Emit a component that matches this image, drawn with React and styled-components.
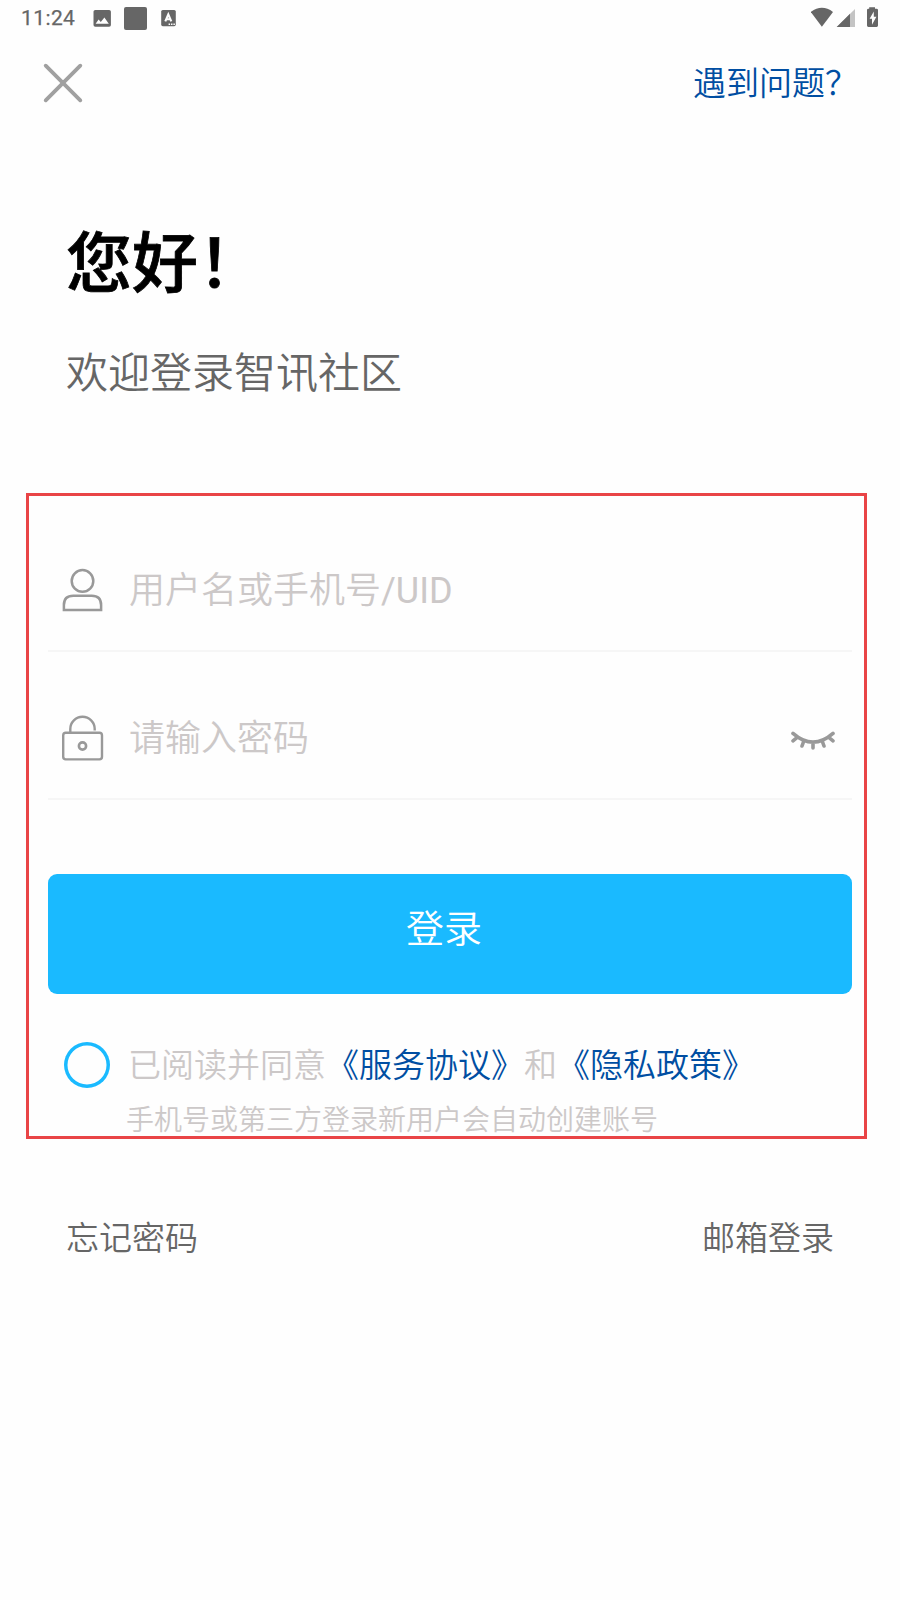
import React, { useState } from 'react';
import styled, { createGlobalStyle } from 'styled-components';

const GlobalStyle = createGlobalStyle`
  * {
    box-sizing: border-box;
  }
  body {
    margin: 0;
    background: #fefefe;
    font-family: Roboto, 'Noto Sans CJK SC', sans-serif;
  }
`;

function StatusBar() {
  return (
    <Status>
      <StatusGroup>
        <Clock>11:24</Clock>
        <svg width="18" height="18" viewBox="0 0 18 18">
          <rect x="0.5" y="0" width="17.4" height="16.8" rx="1.8" fill="#666" />
          <path d="M2.6 13.8 L5.6 9.4 L7.8 12 L11.4 7.4 L15.8 13.8 Z" fill="#fefefe" />
        </svg>
        <Square />
        <svg width="16" height="18" viewBox="0 0 16 18">
          <rect x="0.2" y="0" width="14.6" height="16.2" rx="1.6" fill="#666" />
          <path d="M4.3 11.4 L7.3 4.4 L10.3 11.4 M5.4 9.2 H9.2" fill="none" stroke="#fefefe" strokeWidth="2.1" />
          <path d="M7.6 14.2 h1.5 M10 14.2 h1.5 M12.4 14.2 h1.5" stroke="#fefefe" strokeWidth="1.4" />
        </svg>
      </StatusGroup>
      <svg width="68" height="22" viewBox="0 0 68 22">
        <path d="M-0.2 5 Q10.9 -3.4 22 5 L10.9 19.7 Z" fill="#666" />
        <path d="M25.7 20 L44 2 V20 Z" fill="#c4c4c4" />
        <path d="M25.7 20 L39 6.8 V20 Z" fill="#666" />
        <path d="M58.2 1.7 V0.2 H64 V1.7 H65.6 Q67 1.7 67 3.1 V18.6 Q67 20 65.6 20 H57.4 Q56 20 56 18.6 V3.1 Q56 1.7 57.4 1.7 Z" fill="#666" />
        <path d="M62.8 4.6 L58.6 11.8 H61 V17.8 L65.4 9.8 H62.8 Z" fill="#fefefe" />
      </svg>
    </Status>
  );
}

function Login() {
  const [agreed, setAgreed] = useState(false);
  return (
    <Page lang="zh-CN">
      <GlobalStyle />
      <StatusBar />
      <Header>
        <IconButton aria-label="close">
          <svg width="40" height="40" viewBox="0 0 40 40">
            <path d="M2.7 2.7 L37.3 37.3 M37.3 2.7 L2.7 37.3" stroke="#a0a0a0" strokeWidth="3.8" strokeLinecap="round" />
          </svg>
        </IconButton>
        <HelpLink>遇到问题？</HelpLink>
      </Header>
      <Title>您好！</Title>
      <Subtitle>欢迎登录智讯社区</Subtitle>
      <FormBox>
        <Field>
          <svg width="42" height="44" viewBox="0 0 42 44">
            <circle cx="20.5" cy="12.9" r="10.8" fill="none" stroke="#999" strokeWidth="2.5" />
            <path d="M1.9 41.9 V37 Q1.9 27.8 11.3 27.8 H29.7 Q39.1 27.8 39.1 37 V41.9 Z" fill="none" stroke="#999" strokeWidth="2.5" />
          </svg>
          <Input type="text" placeholder="用户名或手机号/UID" />
        </Field>
        <Field>
          <svg width="42" height="46" viewBox="0 0 42 46">
            <rect x="1.2" y="17.8" width="38.8" height="26.6" rx="2.6" fill="none" stroke="#999" strokeWidth="2.4" />
            <path d="M8.3 17 V14 A12.2 12.2 0 0 1 32.7 14 V15.5" fill="none" stroke="#999" strokeWidth="2.4" />
            <circle cx="20.5" cy="31" r="3.6" fill="none" stroke="#999" strokeWidth="2.6" />
          </svg>
          <Input type="password" placeholder="请输入密码" />
          <EyeButton aria-label="show password">
            <svg width="44" height="20" viewBox="0 0 44 20">
              <path d="M2 2.4 Q22 20 42 2.4 M6.5 6.2 L2 9.8 M13 9.5 L11 15 M22 11.2 V17 M31 9.5 L33 15 M37.5 6.2 L42 9.8" fill="none" stroke="#999" strokeWidth="3.6" strokeLinecap="round" />
            </svg>
          </EyeButton>
        </Field>
        <SubmitButton>登录</SubmitButton>
        <Agreement>
          <Radio $checked={agreed} onClick={() => setAgreed(!agreed)} aria-label="agree" />
          <p>
            已阅读并同意<a>《服务协议》</a>和<a>《隐私政策》</a>
          </p>
        </Agreement>
        <Hint>手机号或第三方登录新用户会自动创建账号</Hint>
      </FormBox>
      <Footer>
        <span>忘记密码</span>
        <span>邮箱登录</span>
      </Footer>
    </Page>
  );
}

const Page = styled.div`
  width: 900px;
  height: 1600px;
  display: flex;
  flex-direction: column;
  overflow: hidden;
  font-weight: 350;
`;

const Status = styled.div`
  height: 36px;
  display: flex;
  justify-content: space-between;
  align-items: flex-start;
  padding: 7px 21px 0 21px;
`;

const StatusGroup = styled.div`
  display: flex;
  align-items: center;
  height: 23px;

  svg:last-child {
    margin-left: 14px;
  }
`;

const Clock = styled.span`
  width: 72px;
  color: #666;
  font-size: 21px;
  font-weight: 400;
  line-height: 23px;
  letter-spacing: 0.4px;
  -webkit-text-stroke: 0.25px #666;
`;

const Square = styled.div`
  width: 23px;
  height: 23px;
  margin-left: 13px;
  border-radius: 2px;
  background: #666;
`;

const Header = styled.div`
  height: 96px;
  display: flex;
  justify-content: space-between;
  align-items: flex-start;
  padding: 27px 42px 0 43px;
`;

const IconButton = styled.button`
  display: flex;
  padding: 0;
  border: none;
  background: none;
`;

const EyeButton = styled(IconButton)`
  padding-top: 7px;
`;

const HelpLink = styled.a`
  padding-top: 1px;
  color: #004ea2;
  font-size: 33px;
  line-height: 40px;
`;

const Title = styled.h1`
  margin: 93px 0 0 66px;
  color: #000;
  font-size: 66px;
  font-weight: 500;
  line-height: 80px;
  -webkit-text-stroke: 0.8px #000;
`;

const Subtitle = styled.p`
  margin: 39px 0 0 66px;
  color: #666;
  font-size: 42px;
  line-height: 60px;
`;

const FormBox = styled.div`
  width: 841px;
  height: 646px;
  margin: 89px 0 0 26px;
  padding: 8px 12px 0 19px;
  border: 3px solid #e94446;
`;

const Field = styled.div`
  height: 148px;
  display: flex;
  align-items: center;
  padding: 25px 17px 0 14px;
  border-bottom: 2px solid #f6f6f6;
`;

/* regular Roboto for the latin part, DemiLight for the chinese part */
const Input = styled.input`
  flex: 1;
  min-width: 0;
  height: 58px;
  margin-left: 25px;
  padding: 3px 0 0;
  border: none;
  outline: none;
  background: none;
  color: #333;
  font-family: Roboto, 'Noto Sans CJK SC DemiLight', 'Noto Sans CJK SC', sans-serif;
  font-size: 36px;
  font-weight: 400;
  &::placeholder {
    color: #ccc8c8;
    opacity: 1;
  }
`;

const SubmitButton = styled.button`
  width: 100%;
  height: 120px;
  margin-top: 74px;
  padding: 0 12px 18px 0;
  border: none;
  border-radius: 9px;
  background: #1abaff;
  color: #fff;
  font-family: inherit;
  font-size: 38px;
  font-weight: inherit;
`;

const Agreement = styled.div`
  height: 46px;
  display: flex;
  align-items: center;
  gap: 18px;
  margin-top: 48px;
  padding-left: 16px;
  color: #ccc8c8;
  font-size: 33px;
  line-height: 46px;

  p {
    margin: 0;
    padding-top: 2px;
    white-space: nowrap;
  }
  a {
    color: #004ea2;
  }
`;

const Radio = styled.button`
  width: 46px;
  height: 46px;
  padding: 0;
  border: none;
  border-radius: 50%;
  box-shadow: inset 0 0 0 3.5px #1abaff;
  background: ${(props) => (props.$checked ? '#1abaff' : 'none')};
`;

const Hint = styled.p`
  margin: 16px 0 0 78px;
  color: #ccc8c8;
  font-size: 28px;
  line-height: 34px;
  white-space: nowrap;
`;

const Footer = styled.div`
  display: flex;
  justify-content: space-between;
  margin-top: 80px;
  padding: 0 66px;
  color: #666;
  font-size: 33px;
  line-height: 40px;
`;

export default Login;
